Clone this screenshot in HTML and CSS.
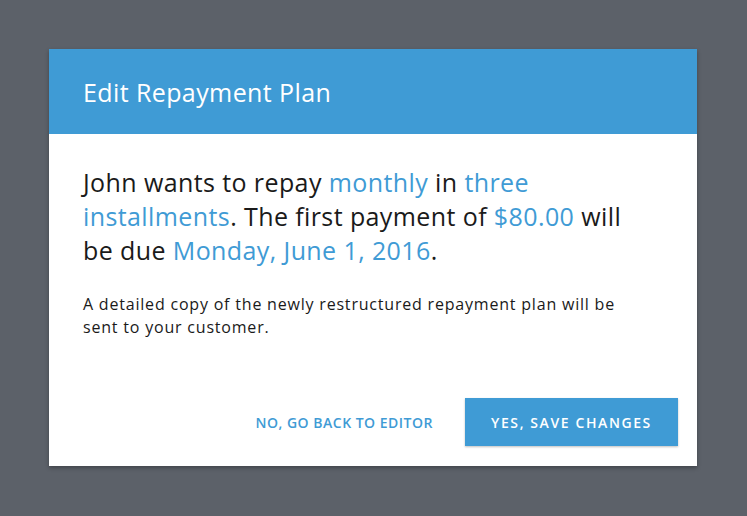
FILE: index.html
```html
<!DOCTYPE html>
<html>
<head>
<meta charset="utf-8">
<link rel="stylesheet" href="styles.css">
</head>
<body>
<div class="modal">
  <div class="modal-header">
    <h1 class="modal-title">Edit Repayment Plan</h1>
  </div>
  <div class="modal-body">
    <p class="summary">John wants to repay <span class="hl">monthly</span> in <span class="hl">three installments</span>. The first payment of <span class="hl">$80.00</span> will be due <span class="hl">Monday, June 1, 2016</span>.</p>
    <p class="note">A detailed copy of the newly restructured repayment plan will be sent to your customer.</p>
  </div>
  <div class="modal-footer">
    <button class="btn btn-link">NO, GO BACK TO EDITOR</button>
    <button class="btn btn-primary">YES, SAVE CHANGES</button>
  </div>
</div>
</body>
</html>
```

FILE: styles.css
```css
html, body {
  margin: 0;
  padding: 0;
  height: 100%;
}
body {
  background: #5c6169;
  font-family: "Open Sans", "Noto Sans", sans-serif;
  padding: 49px 50px 0 49px;
  box-sizing: border-box;
}
.modal {
  width: 648px;
  background: #fff;
  box-shadow: 0 2px 4px rgba(0,0,0,0.3);
}
.modal-header {
  background: #3f9bd5;
  height: 85px;
  display: flex;
  align-items: center;
  padding: 0 34px;
}
.modal-title {
  margin: 0;
  color: #fff;
  font-weight: 400;
  font-size: 25px;
  letter-spacing: 0.4px;
}
.modal-body {
  padding: 31px 34px 0;
}
.summary {
  margin: 0;
  font-size: 25px;
  line-height: 34px;
  letter-spacing: 0.4px;
  color: #1a1a1a;
  max-width: 555px;
}
.hl {
  color: #3f9bd5;
}
.note {
  margin: 26px 0 0;
  font-size: 16px;
  line-height: 23px;
  letter-spacing: 0.8px;
  color: #1a1a1a;
  max-width: 548px;
}
.modal-footer {
  display: flex;
  justify-content: flex-end;
  align-items: center;
  gap: 32px;
  padding: 59px 19px 20px;
}
.btn {
  font-family: inherit;
  font-size: 14px;
  font-weight: 600;
  letter-spacing: 0.5px;
  border: none;
  cursor: pointer;
}
.btn-link {
  background: none;
  color: #3f9bd5;
  padding: 0;
}
.btn-primary {
  background: #3f9bd5;
  color: #fff;
  width: 213px;
  height: 48px;
  letter-spacing: 1.6px;
  box-shadow: 0 1px 2px rgba(0,0,0,0.25);
}
```
